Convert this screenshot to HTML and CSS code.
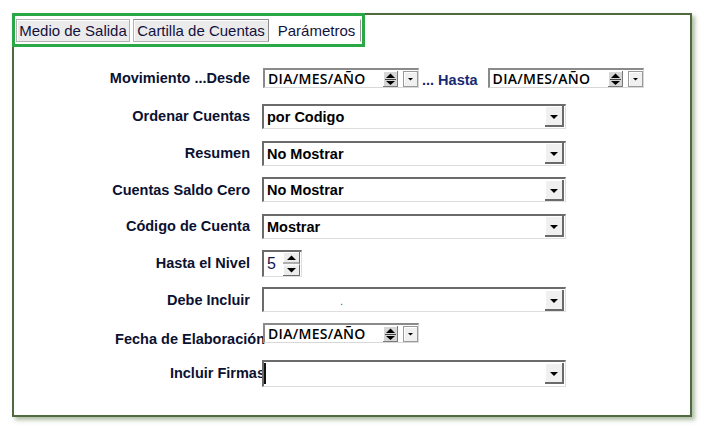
FILE: index.html
```html
<!DOCTYPE html>
<html lang="es">
<head>
<meta charset="utf-8">
<title>Parámetros</title>
<link rel="stylesheet" href="styles.css">
</head>
<body>
<div class="panel">
  <div class="tabs">
    <div class="tab tab-1">Medio de Salida</div>
    <div class="tab tab-2">Cartilla de Cuentas</div>
    <div class="tab tab-3 active">Parámetros</div>
  </div>

  <div class="form">
    <div class="label">Movimiento ...Desde</div>
    <div class="ctrl range">
      <div class="date">
        <span class="date-text">DIA/MES/AÑO</span>
        <svg class="spin-sm" width="15" height="16" viewBox="0 0 15 16"><rect x="0" y="0" width="15" height="16" fill="#d6d6d6"/><path d="M0 0.5H14.5M0.5 0V16" stroke="#fff"/><path d="M0 15.5H15M14.5 0V16" stroke="#7a7a7a"/><polygon points="3,7 12,7 7.5,2.5" fill="#000"/><path d="M2 8.5H13" stroke="#444"/><polygon points="3,10 12,10 7.5,14" fill="#000"/></svg>
        <svg class="drop-sm" width="15" height="16" viewBox="0 0 15 16"><rect x="0.5" y="0.5" width="14" height="15" fill="#f0f0f0" stroke="#9a9a9a"/><path d="M1.5 1.5H13.5M1.5 1.5V14.5" stroke="#fff"/><polygon points="5,7 10,7 7.5,9.5" fill="#000"/></svg>
      </div>
      <span class="hasta">... Hasta</span>
      <div class="date">
        <span class="date-text">DIA/MES/AÑO</span>
        <svg class="spin-sm" width="15" height="16" viewBox="0 0 15 16"><rect x="0" y="0" width="15" height="16" fill="#d6d6d6"/><path d="M0 0.5H14.5M0.5 0V16" stroke="#fff"/><path d="M0 15.5H15M14.5 0V16" stroke="#7a7a7a"/><polygon points="3,7 12,7 7.5,2.5" fill="#000"/><path d="M2 8.5H13" stroke="#444"/><polygon points="3,10 12,10 7.5,14" fill="#000"/></svg>
        <svg class="drop-sm" width="15" height="16" viewBox="0 0 15 16"><rect x="0.5" y="0.5" width="14" height="15" fill="#f0f0f0" stroke="#9a9a9a"/><path d="M1.5 1.5H13.5M1.5 1.5V14.5" stroke="#fff"/><polygon points="5,7 10,7 7.5,9.5" fill="#000"/></svg>
      </div>
    </div>

    <div class="label">Ordenar Cuentas</div>
    <div class="ctrl combo"><span class="val">por Codigo</span><svg class="cbtn" width="19" height="21" viewBox="0 0 19 21"><rect width="19" height="21" fill="#f0f0f0"/><path d="M0 0.5H18M0.5 0V20" stroke="#fff"/><path d="M0 20H19M18 0V21" stroke="#6a6a6a" stroke-width="2"/><polygon points="5,9 13,9 9,13" fill="#000"/></svg></div>

    <div class="label">Resumen</div>
    <div class="ctrl combo"><span class="val">No Mostrar</span><svg class="cbtn" width="19" height="21" viewBox="0 0 19 21"><rect width="19" height="21" fill="#f0f0f0"/><path d="M0 0.5H18M0.5 0V20" stroke="#fff"/><path d="M0 20H19M18 0V21" stroke="#6a6a6a" stroke-width="2"/><polygon points="5,9 13,9 9,13" fill="#000"/></svg></div>

    <div class="label">Cuentas Saldo Cero</div>
    <div class="ctrl combo"><span class="val">No Mostrar</span><svg class="cbtn" width="19" height="21" viewBox="0 0 19 21"><rect width="19" height="21" fill="#f0f0f0"/><path d="M0 0.5H18M0.5 0V20" stroke="#fff"/><path d="M0 20H19M18 0V21" stroke="#6a6a6a" stroke-width="2"/><polygon points="5,9 13,9 9,13" fill="#000"/></svg></div>

    <div class="label">Código de Cuenta</div>
    <div class="ctrl combo"><span class="val">Mostrar</span><svg class="cbtn" width="19" height="21" viewBox="0 0 19 21"><rect width="19" height="21" fill="#f0f0f0"/><path d="M0 0.5H18M0.5 0V20" stroke="#fff"/><path d="M0 20H19M18 0V21" stroke="#6a6a6a" stroke-width="2"/><polygon points="5,9 13,9 9,13" fill="#000"/></svg></div>

    <div class="label">Hasta el Nivel</div>
    <div class="ctrl numspin"><span class="num">5</span><svg class="nbtn" width="17" height="24" viewBox="0 0 17 24"><rect width="17" height="11.5" fill="#ececec"/><path d="M0 0.5H16M0.5 0V11" stroke="#fff"/><path d="M0 11H17M16.5 0V11.5" stroke="#6a6a6a"/><polygon points="4,8 13,8 8.5,3.5" fill="#000"/><rect y="12.5" width="17" height="11.5" fill="#ececec"/><path d="M0 13H16M0.5 12.5V23.5" stroke="#fff"/><path d="M0 23.5H17M16.5 12.5V24" stroke="#6a6a6a"/><polygon points="4,16 13,16 8.5,20.5" fill="#000"/></svg></div>

    <div class="label">Debe Incluir</div>
    <div class="ctrl combo"><span class="dot">.</span><svg class="cbtn" width="19" height="21" viewBox="0 0 19 21"><rect width="19" height="21" fill="#f0f0f0"/><path d="M0 0.5H18M0.5 0V20" stroke="#fff"/><path d="M0 20H19M18 0V21" stroke="#6a6a6a" stroke-width="2"/><polygon points="5,9 13,9 9,13" fill="#000"/></svg></div>

    <div class="label label-over label-low">Fecha de Elaboración</div>
    <div class="ctrl date date-top">
      <span class="date-text">DIA/MES/AÑO</span>
      <svg class="spin-sm" width="15" height="16" viewBox="0 0 15 16"><rect x="0" y="0" width="15" height="16" fill="#d6d6d6"/><path d="M0 0.5H14.5M0.5 0V16" stroke="#fff"/><path d="M0 15.5H15M14.5 0V16" stroke="#7a7a7a"/><polygon points="3,7 12,7 7.5,2.5" fill="#000"/><path d="M2 8.5H13" stroke="#444"/><polygon points="3,10 12,10 7.5,14" fill="#000"/></svg>
      <svg class="drop-sm" width="15" height="16" viewBox="0 0 15 16"><rect x="0.5" y="0.5" width="14" height="15" fill="#f0f0f0" stroke="#9a9a9a"/><path d="M1.5 1.5H13.5M1.5 1.5V14.5" stroke="#fff"/><polygon points="5,7 10,7 7.5,9.5" fill="#000"/></svg>
    </div>

    <div class="label label-over">Incluir Firmas</div>
    <div class="ctrl combo combo-tall"><span class="caret"></span><svg class="cbtn" width="19" height="21" viewBox="0 0 19 21"><rect width="19" height="21" fill="#f0f0f0"/><path d="M0 0.5H18M0.5 0V20" stroke="#fff"/><path d="M0 20H19M18 0V21" stroke="#6a6a6a" stroke-width="2"/><polygon points="5,9 13,9 9,13" fill="#000"/></svg></div>
  </div>
</div>
</body>
</html>
```

FILE: styles.css
```css
* {
  box-sizing: border-box;
}

html,
body {
  margin: 0;
  padding: 0;
  background: #ffffff;
}

body {
  width: 707px;
  height: 434px;
  overflow: hidden;
  font-family: "Liberation Sans", Arial, sans-serif;
}

.panel {
  margin: 13px 0 0 12px;
  width: 680px;
  height: 404px;
  border: 2px solid #4f6a3f;
  background: #ffffff;
  box-shadow: 3px 3px 4px rgba(95, 125, 75, 0.5);
}

/* Tabs */
.tabs {
  display: flex;
  gap: 3px;
  margin: -2px 0 0 -2px;
  width: 353px;
  height: 34px;
  border: 3px solid #2aa845;
  padding: 3px 0 0 1px;
  background: #ffffff;
}

.tab {
  flex: none;
  height: 23px;
  display: flex;
  align-items: center;
  justify-content: center;
  font-size: 15px;
  color: #12123e;
  background: #ebebeb;
  border: 1px solid #b2b2b2;
  box-shadow: inset 1px 1px 0 #ffffff;
  white-space: nowrap;
}

.tab-1 { width: 114px; }
.tab-2 { width: 136px; border-top-color: #8c8c8c; border-right-color: #8c8c8c; }
.tab-3 { width: 89px; }

.tab.active {
  background: #ffffff;
  border-color: transparent;
  border-right-color: #9a9a9a;
  box-shadow: none;
}

/* Form grid */
.form {
  display: grid;
  grid-template-columns: 236px 1fr;
  grid-template-rows: 40px repeat(8, 36.7px);
  column-gap: 12px;
  align-items: center;
  margin-top: 11px;
}

.label {
  text-align: right;
  font-weight: bold;
  font-size: 14.5px;
  color: #0b1131;
  white-space: nowrap;
}

.label-over {
  margin-right: -15px;
}

.label-low {
  margin-top: 5px;
}

.ctrl {
  position: relative;
  z-index: 1;
  justify-self: start;
}

.range {
  display: flex;
  align-items: center;
  margin-left: 1px;
}

.hasta {
  font-weight: bold;
  font-size: 14.5px;
  color: #172a74;
  margin: 4px 10px 0 3px;
  white-space: nowrap;
}

/* Date picker */
.date {
  display: flex;
  align-items: center;
  width: 156px;
  height: 20px;
  border-style: solid;
  border-width: 2px 1px 1px 2px;
  border-color: #8a8a8a #d8d8d8 #d8d8d8 #8a8a8a;
  background: #ffffff;
}

.date-top {
  align-self: start;
  margin-top: 5px;
  margin-left: 1px;
}

.date-text {
  flex: 1;
  padding-left: 3px;
  font-family: "Open Sans", "Noto Sans", sans-serif;
  font-weight: 600;
  font-size: 14px;
  letter-spacing: 0.3px;
  line-height: 16px;
  color: #000000;
  white-space: nowrap;
}

.spin-sm {
  display: block;
  flex: none;
}

.drop-sm {
  display: block;
  flex: none;
  margin-left: 5px;
}

/* Combo box */
.combo {
  display: flex;
  align-items: center;
  width: 304px;
  height: 25px;
  border-style: solid;
  border-width: 2px 1px 1px 2px;
  border-color: #6b6b6b #dedede #dedede #6b6b6b;
  background: #ffffff;
  padding-left: 3px;
}

.combo-tall {
  height: 27px;
}

.val {
  flex: 1;
  font-weight: bold;
  font-size: 14.5px;
  color: #000000;
  white-space: nowrap;
}

.dot {
  flex: 1;
  padding-left: 73px;
  font-size: 11px;
  color: #3a5aa0;
  line-height: 12px;
  margin-top: 2px;
}

.caret {
  width: 2px;
  height: 21px;
  margin-left: -3px;
  background: #111111;
  margin-right: auto;
}

.cbtn {
  display: block;
  flex: none;
  margin-left: auto;
  margin-right: 1px;
}

/* Number spinner */
.numspin {
  display: flex;
  align-items: center;
  width: 40px;
  height: 27px;
  border-style: solid;
  border-width: 2px 1px 1px 2px;
  border-color: #6b6b6b #dedede #dedede #6b6b6b;
  background: #ffffff;
  padding-left: 3px;
}

.num {
  flex: 1;
  font-size: 16px;
  color: #101a50;
}

.nbtn {
  display: block;
  flex: none;
  margin-right: 1px;
}
```
